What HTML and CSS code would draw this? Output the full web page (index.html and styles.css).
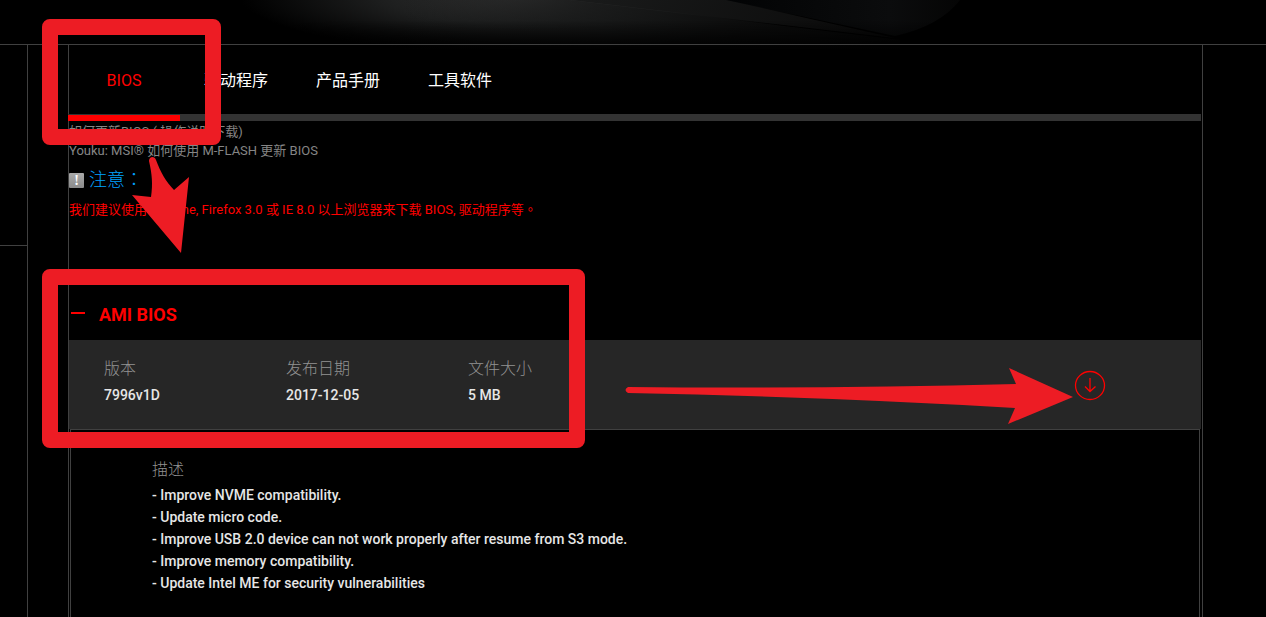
FILE: index.html
```html
<!DOCTYPE html>
<html lang="zh-CN">

<head>
    <meta charset="UTF-8">
    <meta name="viewport" content="width=device-width, initial-scale=1.0">
    <title>BIOS</title>
    <link rel="stylesheet" href="styles.css">
</head>

<body>
    <header class="hero">
        <svg class="hero-art" width="1266" height="50" viewBox="0 0 1266 50" aria-hidden="true">
            <defs>
                <radialGradient id="glow" gradientUnits="userSpaceOnUse" cx="0" cy="0" r="1" gradientTransform="translate(530 -4) scale(290 58)">
                    <stop offset="0" stop-color="#343434" />
                    <stop offset="0.5" stop-color="#1e1f1f" />
                    <stop offset="1" stop-color="#000" />
                </radialGradient>
                <linearGradient id="beam" x1="0" y1="0" x2="1" y2="0.1">
                    <stop offset="0" stop-color="#1a1b1b" />
                    <stop offset="1" stop-color="#0b0b0b" />
                </linearGradient>
                <linearGradient id="haze" x1="0" y1="0" x2="1" y2="0">
                    <stop offset="0" stop-color="#151616" stop-opacity="0" />
                    <stop offset="0.4" stop-color="#151616" stop-opacity="0.7" />
                    <stop offset="1" stop-color="#070707" />
                </linearGradient>
                <linearGradient id="edge" x1="0" y1="0" x2="1" y2="0">
                    <stop offset="0" stop-color="#020304" />
                    <stop offset="0.7" stop-color="#0b0c0d" />
                    <stop offset="1" stop-color="#050505" />
                </linearGradient>
                <linearGradient id="fade" x1="0" y1="0" x2="0" y2="1">
                    <stop offset="0.4" stop-color="#000" stop-opacity="0" />
                    <stop offset="1" stop-color="#000" />
                </linearGradient>
            </defs>
            <rect x="240" width="660" height="50" fill="url(#glow)" />
            <path d="M400 0H570L900 40V50H400z" fill="url(#haze)" />
            <path d="M570 0H726L895 38z" fill="url(#beam)" />
            <path d="M726 0H960Q940 26 895 36z" fill="url(#edge)" />
            <rect width="1266" height="50" fill="url(#fade)" />
        </svg>
    </header>

    <div class="layout">
        <aside class="rail">
            <div class="rail-top"></div>
        </aside>

        <main class="content">
            <nav class="tabs">
                <a class="tab active" href="#bios">BIOS</a>
                <a class="tab" href="#driver">驱动程序</a>
                <a class="tab" href="#manual">产品手册</a>
                <a class="tab" href="#utility">工具软件</a>
            </nav>

            <section class="notes">
                <p>如何更新BIOS ( 操作说明下载)</p>
                <p>Youku: MSI® 如何使用 M-FLASH 更新 BIOS</p>
                <h2 class="notice">
                    <span class="notice-icon">!</span>
                    <span>注意<span class="centered" lang="zh-TW">：</span></span>
                </h2>
                <p class="warning">我们建议使用 Chrome, Firefox 3.0 或 IE 8.0 以上浏览器来下载 BIOS, 驱动程序等<span class="centered" lang="zh-TW">。</span></p>
            </section>

            <section class="download" id="bios">
                <h3 class="group">
                    <svg class="minus" width="14" height="2" viewBox="0 0 14 2" aria-hidden="true"><path d="M0 1h14" stroke="#f00" stroke-width="2" /></svg>
                    AMI BIOS
                </h3>
                <div class="file">
                    <table class="info">
                        <thead>
                            <tr>
                                <th>版本</th>
                                <th>发布日期</th>
                                <th>文件大小</th>
                            </tr>
                        </thead>
                        <tbody>
                            <tr>
                                <td>7996v1D</td>
                                <td>2017-12-05</td>
                                <td>5 MB</td>
                            </tr>
                        </tbody>
                    </table>
                    <a class="get" href="#download" aria-label="下载">
                        <svg width="32" height="32" viewBox="0 0 32 32" fill="none" stroke="#f00" stroke-width="1.3">
                            <ellipse cx="16" cy="16.500" rx="14.5" ry="14" />
                            <path d="M16 9V22.500M11 17.500L16 22.500L21.500 17.500" />
                        </svg>
                    </a>
                </div>
                <div class="detail">
                    <h4>描述</h4>
                    <ul>
                        <li>- Improve NVME compatibility.</li>
                        <li>- Update micro code.</li>
                        <li>- Improve USB 2.0 device can not work properly after resume from S3 mode.</li>
                        <li>- Improve memory compatibility.</li>
                        <li>- Update Intel ME for security vulnerabilities</li>
                    </ul>
                </div>
            </section>
        </main>
    </div>

    <!-- red marks on top of the page -->
    <div class="mark mark-tab"></div>
    <div class="mark mark-file"></div>
    <svg class="arrow arrow-down" width="60" height="98" viewBox="130 156 60 98" aria-hidden="true">
        <path d="M149 161C149 156 155 156 156 160C160 171 166 182 174 190L189 177L181 253L132 195L151 197C153 184 152 174 149 161z" fill="#ed1c24" />
    </svg>
    <svg class="arrow arrow-right" width="450" height="58" viewBox="625 367 450 58" aria-hidden="true">
        <path d="M628 387Q820 389 1016 384L1009 368L1073 397L1008 424L1015 408Q830 397 628 393Q623 390 628 387z" fill="#ed1c24" />
    </svg>
</body>

</html>
```
FILE: styles.css
```css
* {
    box-sizing: border-box;
}

body {
    position: relative;
    display: flex;
    flex-direction: column;
    min-height: 100vh;
    margin: 0;
    background-color: #000;
    color: #858585;
    font-family: Roboto, "Noto Sans CJK SC", sans-serif;
    font-size: 13px;
}

h2,
h3,
h4,
p,
ul {
    margin: 0;
    padding: 0;
}

a {
    text-decoration: none;
}

.hero {
    position: relative;
    height: 45px;
    border-bottom: 1px solid #404040;
}

.hero-art {
    position: absolute;
    top: 0;
    left: 0;
    z-index: -1;
}

.layout {
    display: flex;
    flex: 1;
    gap: 40px;
    padding-right: 63px;
}

.rail {
    width: 28px;
    border-right: 1px solid #404040;
}

.rail-top {
    height: 201px;
    border-bottom: 1px solid #404040;
}

.content {
    display: flex;
    flex: 1;
    flex-direction: column;
    padding-right: 1px;
    border-left: 1px solid #404040;
    border-right: 1px solid #404040;
}

.tabs {
    display: flex;
    height: 76px;
    margin-left: -1px;
    box-shadow: inset 0 -7px #333;
}

.tab {
    width: 112px;
    height: 76px;
    color: #fff;
    font-size: 16px;
    line-height: 72px;
    text-align: center;
}

.active {
    border-bottom: 6px solid #f00;
    color: #f00;
}

.notes {
    height: 168px;
    padding-top: 1px;
    line-height: 19px;
}

.notice {
    display: flex;
    align-items: center;
    gap: 5px;
    height: 37px;
    color: #00a2ff;
    font-size: 18px;
    font-weight: 300;
}

.notice-icon {
    width: 15px;
    height: 15px;
    margin-top: 4px;
    border-radius: 1px;
    background: linear-gradient(#aaa, #8a8a8a);
    color: #fff;
    font: bold 14px/15px "Liberation Serif", serif;
    text-align: center;
}

.warning {
    height: 24px;
    color: #f00;
    line-height: 24px;
}

.centered {
    font-family: "Noto Sans CJK TC", sans-serif;
}

.download {
    display: flex;
    flex: 1;
    flex-direction: column;
}

.group {
    display: flex;
    align-items: center;
    gap: 14px;
    height: 51px;
    padding-left: 2px;
    color: #f00;
    font-size: 18px;
    line-height: 51px;
}

.minus {
    margin-bottom: 4px;
}

.file {
    display: flex;
    justify-content: space-between;
    height: 89px;
    padding: 16px 95px 0 35px;
    background-color: #262626;
}

.info {
    width: 546px;
    height: 52px;
    border-collapse: collapse;
    table-layout: fixed;
    text-align: left;
}

.info th,
.info td {
    height: 26px;
    padding: 0;
}

.info th,
.detail h4 {
    color: #929292;
    font-size: 16px;
    font-weight: 300;
    line-height: 26px;
}

.info td {
    color: #e6e6e6;
    font-size: 14px;
    font-weight: 500;
}

.get {
    height: 32px;
    margin-top: 13px;
}

.get svg {
    display: block;
}

.detail {
    flex: 1;
    margin: 0 1px;
    padding: 27px 81px;
    border: 1px solid #404040;
    border-bottom: 0;
}

.detail ul {
    margin-top: 1px;
    color: #e6e6e6;
    font-size: 14px;
    font-weight: 500;
    line-height: 22px;
    list-style: none;
}

.mark {
    position: absolute;
    left: 42px;
    border: 16px solid #ed1c24;
    border-radius: 8px;
}

.mark-tab {
    top: 19px;
    width: 179px;
    height: 126px;
}

.mark-file {
    top: 269px;
    width: 543px;
    height: 179px;
}

.arrow {
    position: absolute;
}

.arrow-down {
    top: 156px;
    left: 130px;
}

.arrow-right {
    top: 367px;
    left: 625px;
}
```
